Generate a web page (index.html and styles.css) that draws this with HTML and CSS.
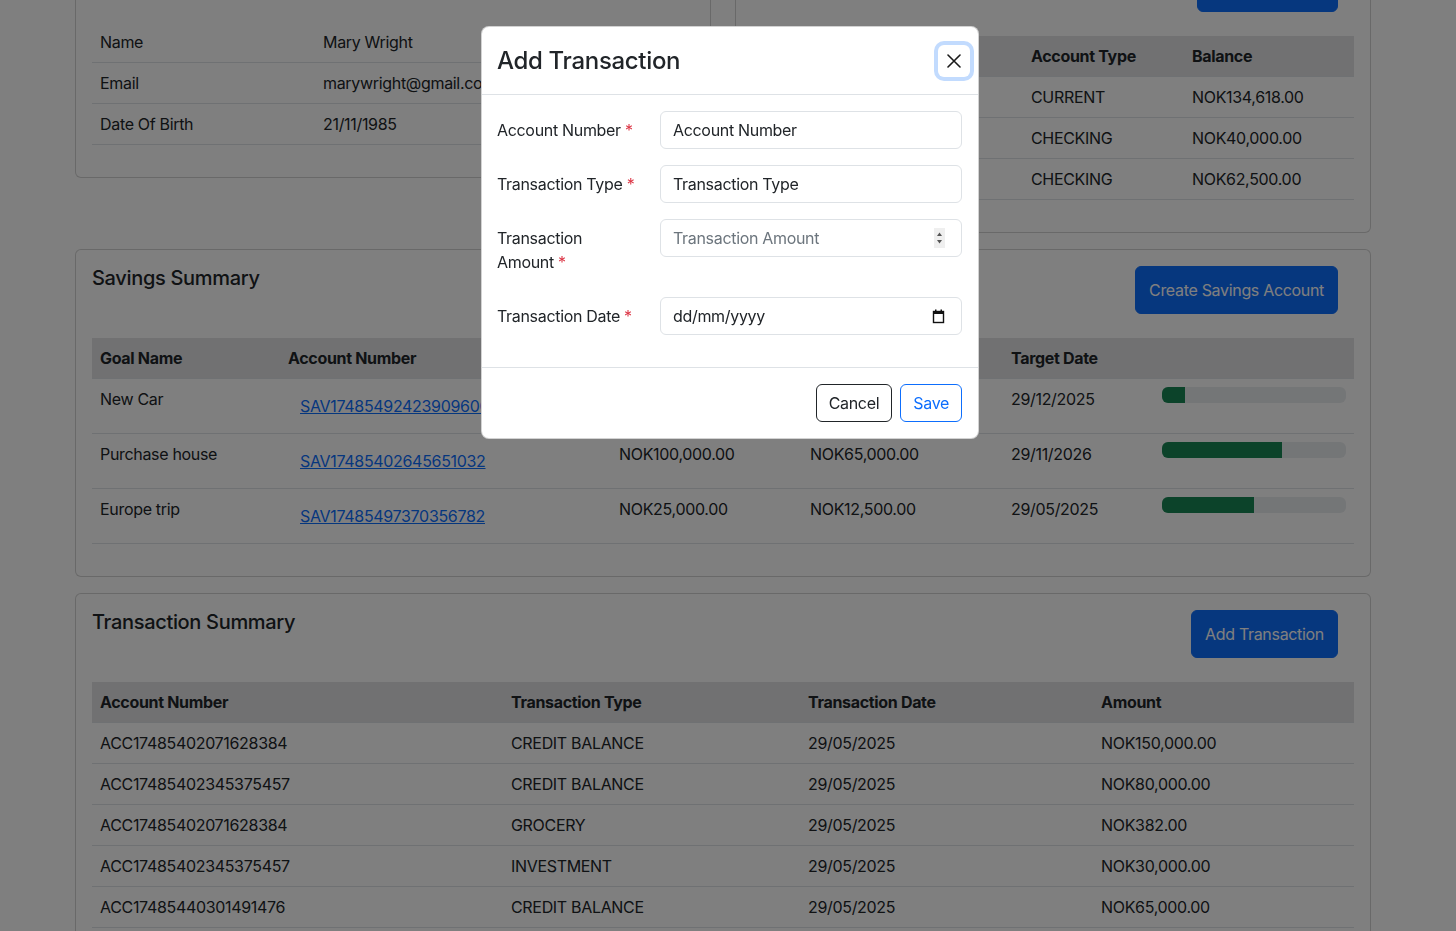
FILE: index.html
```html
<!DOCTYPE html>
<html lang="en">
<head>
<meta charset="utf-8">
<title>Customer Dashboard</title>
<link rel="stylesheet" href="styles.css">
</head>
<body>
<main class="page">
  <div class="top-row">
    <section class="card">
      <h5 class="card-title profile-title">Customer Details</h5>
      <table class="table profile-table">
        <tbody>
          <tr><td>Name</td><td>Mary Wright</td></tr>
          <tr><td>Email</td><td>marywright@gmail.com</td></tr>
          <tr><td>Date Of Birth</td><td>21/11/1985</td></tr>
        </tbody>
      </table>
    </section>
    <section class="card">
      <div class="card-head">
        <h5 class="card-title">Account Summary</h5>
        <button class="btn btn-primary btn-tall">Create Account</button>
      </div>
      <table class="table accounts-table">
        <thead>
          <tr><th>Account Number</th><th>Account Type</th><th>Balance</th></tr>
        </thead>
        <tbody>
          <tr><td>ACC17485402071628384</td><td>CURRENT</td><td>NOK134,618.00</td></tr>
          <tr><td>ACC17485402345375457</td><td>CHECKING</td><td>NOK40,000.00</td></tr>
          <tr><td>ACC17485440301491476</td><td>CHECKING</td><td>NOK62,500.00</td></tr>
        </tbody>
      </table>
    </section>
  </div>

  <section class="card">
    <div class="card-head">
      <h5 class="card-title">Savings Summary</h5>
      <button class="btn btn-primary btn-tall">Create Savings Account</button>
    </div>
    <table class="table savings-table">
      <thead>
        <tr><th>Goal Name</th><th>Account Number</th><th>Target Amount</th><th>Current Amount</th><th>Target Date</th><th></th></tr>
      </thead>
      <tbody>
        <tr>
          <td>New Car</td>
          <td><a class="btn-link" href="#">SAV17485492423909600</a></td>
          <td>NOK400,000.00</td>
          <td>NOK50,000.00</td>
          <td>29/12/2025</td>
          <td><div class="progress"><div class="progress-bar" style="width:12.5%"></div></div></td>
        </tr>
        <tr>
          <td>Purchase house</td>
          <td><a class="btn-link" href="#">SAV17485402645651032</a></td>
          <td>NOK100,000.00</td>
          <td>NOK65,000.00</td>
          <td>29/11/2026</td>
          <td><div class="progress"><div class="progress-bar" style="width:65%"></div></div></td>
        </tr>
        <tr>
          <td>Europe trip</td>
          <td><a class="btn-link" href="#">SAV17485497370356782</a></td>
          <td>NOK25,000.00</td>
          <td>NOK12,500.00</td>
          <td>29/05/2025</td>
          <td><div class="progress"><div class="progress-bar" style="width:50%"></div></div></td>
        </tr>
      </tbody>
    </table>
  </section>

  <section class="card">
    <div class="card-head">
      <h5 class="card-title">Transaction Summary</h5>
      <button class="btn btn-primary btn-tall">Add Transaction</button>
    </div>
    <table class="table tx-table">
      <thead>
        <tr><th>Account Number</th><th>Transaction Type</th><th>Transaction Date</th><th>Amount</th></tr>
      </thead>
      <tbody>
        <tr><td>ACC17485402071628384</td><td>CREDIT BALANCE</td><td>29/05/2025</td><td>NOK150,000.00</td></tr>
        <tr><td>ACC17485402345375457</td><td>CREDIT BALANCE</td><td>29/05/2025</td><td>NOK80,000.00</td></tr>
        <tr><td>ACC17485402071628384</td><td>GROCERY</td><td>29/05/2025</td><td>NOK382.00</td></tr>
        <tr><td>ACC17485402345375457</td><td>INVESTMENT</td><td>29/05/2025</td><td>NOK30,000.00</td></tr>
        <tr><td>ACC17485440301491476</td><td>CREDIT BALANCE</td><td>29/05/2025</td><td>NOK65,000.00</td></tr>
        <tr><td>ACC17485440301491476</td><td>GROCERY</td><td>29/05/2025</td><td>NOK1,118.00</td></tr>
      </tbody>
    </table>
  </section>
</main>

<div class="backdrop"></div>

<div class="modal" role="dialog" aria-labelledby="modal-title">
  <div class="modal-header">
    <h4 class="modal-title" id="modal-title">Add Transaction</h4>
    <button class="btn-close" aria-label="Close">
      <svg width="14" height="14" viewBox="0 0 14 14" aria-hidden="true"><path d="M1 1L13 13M13 1L1 13" stroke="#1a1a1a" stroke-width="1.6" stroke-linecap="round"/></svg>
    </button>
  </div>
  <div class="modal-body">
    <div class="form-row">
      <label class="form-label">Account Number <span class="req">*</span></label>
      <div class="form-control"><span class="fc-text">Account Number</span></div>
    </div>
    <div class="form-row">
      <label class="form-label">Transaction Type <span class="req">*</span></label>
      <div class="form-control"><span class="fc-text">Transaction Type</span></div>
    </div>
    <div class="form-row">
      <label class="form-label">Transaction Amount <span class="req">*</span></label>
      <div class="form-control">
        <span class="fc-text placeholder">Transaction Amount</span>
        <span class="spinner" aria-hidden="true">
          <svg width="11" height="20" viewBox="0 0 11 20"><path d="M5.5 4.5L8 8H3Z" fill="#555"/><path d="M5.5 15.5L8 12H3Z" fill="#555"/></svg>
        </span>
      </div>
    </div>
    <div class="form-row">
      <label class="form-label">Transaction Date <span class="req">*</span></label>
      <div class="form-control">
        <span class="fc-text">dd/mm/yyyy</span>
        <svg class="cal" width="13" height="15" viewBox="0 0 13 15" aria-hidden="true">
          <rect x="1.5" y="2.5" width="10" height="11" fill="none" stroke="#111" stroke-width="1.4"/>
          <rect x="1" y="2" width="11" height="3" fill="#111"/>
          <rect x="3" y="0.5" width="1.5" height="2.5" fill="#111"/>
          <rect x="8.5" y="0.5" width="1.5" height="2.5" fill="#111"/>
        </svg>
      </div>
    </div>
  </div>
  <div class="modal-footer">
    <button class="btn btn-outline-dark">Cancel</button>
    <button class="btn btn-outline-primary">Save</button>
  </div>
</div>
</body>
</html>
```

FILE: styles.css
```css
html, body {
  margin: 0;
  padding: 0;
  overflow: hidden;
  height: 100%;
}

body {
  font-family: Inter, "Noto Sans", "Liberation Sans", sans-serif;
  font-size: 16px;
  line-height: 1.5;
  letter-spacing: -0.02em;
  color: #212529;
  background: #ffffff;
}

.page {
  margin-top: -53px;
  padding: 0 85px 0 75px;
}

.top-row {
  display: grid;
  grid-template-columns: 1fr 1fr;
  gap: 24px;
  align-items: start;
  margin-bottom: 16px;
}

.card {
  border: 1px solid rgba(0, 0, 0, 0.175);
  border-radius: 6px;
  padding: 16px;
  margin-bottom: 16px;
  background: #fff;
}

.top-row .card {
  margin-bottom: 0;
}

.card-head {
  display: flex;
  justify-content: space-between;
  align-items: flex-start;
  margin-bottom: 24px;
}

.card-title {
  margin: 0;
  font-size: 20px;
  font-weight: 500;
  line-height: 1.2;
}

.profile-title {
  margin-bottom: 34px;
}

.btn {
  font-family: inherit;
  font-size: 16px;
  letter-spacing: inherit;
  line-height: 24px;
  padding: 6px 12px;
  border: 1px solid transparent;
  border-radius: 6px;
  background: transparent;
  cursor: pointer;
}

.btn-primary {
  background: #0d6efd;
  border-color: #0d6efd;
  color: #fff;
}

.btn-tall {
  padding: 11px 13px;
  margin-right: 16px;
}

.btn-outline-dark {
  border-color: #212529;
  color: #212529;
}

.btn-outline-primary {
  border-color: #0d6efd;
  color: #0d6efd;
}

.table {
  width: 100%;
  border-collapse: collapse;
  table-layout: fixed;
  margin-bottom: 16px;
}

.table th,
.table td {
  padding: 8px;
  border-bottom: 1px solid #dee2e6;
  text-align: left;
  vertical-align: top;
  white-space: nowrap;
  overflow: hidden;
}

.table th {
  background: #e2e3e5;
  font-weight: 700;
}

.profile-table td:first-child { width: 207px; }

.accounts-table th:nth-child(1) { width: 255px; }
.accounts-table th:nth-child(2) { width: 145px; }

.savings-table th:nth-child(1) { width: 172px; }
.savings-table th:nth-child(2) { width: 315px; }
.savings-table th:nth-child(3) { width: 175px; }
.savings-table th:nth-child(4) { width: 185px; }
.savings-table th:nth-child(5) { width: 135px; }

.tx-table th:nth-child(1) { width: 395px; }
.tx-table th:nth-child(2) { width: 281px; }
.tx-table th:nth-child(3) { width: 277px; }

.btn-link {
  display: inline-block;
  padding: 6px 12px 6px 11px;
  border: 1px solid transparent;
  color: #0d6efd;
  text-decoration: underline;
}

.progress {
  height: 16px;
  background: #e9ecef;
  border-radius: 6px;
  overflow: hidden;
  display: flex;
}

.progress-bar {
  background: #198754;
  height: 100%;
}

/* Modal */
.backdrop {
  position: fixed;
  inset: 0;
  background: rgba(0, 0, 0, 0.5);
}

.modal {
  position: fixed;
  top: 26px;
  left: 481px;
  width: 498px;
  box-sizing: border-box;
  background: #fff;
  border: 1px solid rgba(0, 0, 0, 0.175);
  border-radius: 8px;
}

.modal-header {
  display: flex;
  align-items: center;
  justify-content: space-between;
  padding: 16px 16px 16px 15px;
  border-bottom: 1px solid #dee2e6;
}

.modal-title {
  margin: 0;
  font-size: 24px;
  font-weight: 500;
  line-height: 35px;
}

.btn-close {
  width: 32px;
  height: 32px;
  margin-right: -8px;
  padding: 0;
  border: 0;
  border-radius: 6px;
  background: #fff;
  box-shadow: 0 0 0 4px #c2dbfe;
  display: flex;
  align-items: center;
  justify-content: center;
}

.modal-body {
  padding: 16px 16px 16px 15px;
}

.form-row {
  display: grid;
  grid-template-columns: 163px 1fr;
  margin-bottom: 16px;
}

.form-label {
  padding: 7px 21px 7px 0;
  line-height: 24px;
}

.req {
  color: #dc3545;
}

.form-control {
  display: flex;
  align-items: center;
  height: 38px;
  box-sizing: border-box;
  padding: 6px 12px;
  border: 1px solid #dee2e6;
  border-radius: 6px;
  line-height: 24px;
}

.fc-text {
  flex: 1;
}

.placeholder {
  color: #6c757d;
}

.spinner {
  width: 11px;
  height: 20px;
  background: #efefef;
  margin-right: 4px;
  display: flex;
}

.cal {
  margin-right: 4px;
}

.modal-footer {
  display: flex;
  justify-content: flex-end;
  gap: 8px;
  padding: 16px;
  border-top: 1px solid #dee2e6;
}
```
